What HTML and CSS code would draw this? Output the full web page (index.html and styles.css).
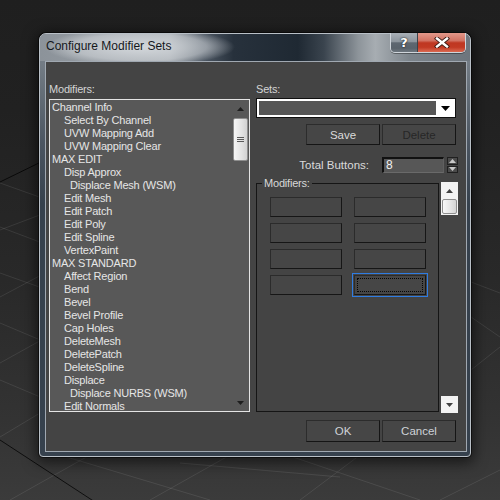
FILE: index.html
```html
<!DOCTYPE html>
<html>
<head>
<meta charset="utf-8">
<title>Configure Modifier Sets</title>
<link rel="stylesheet" href="styles.css">
</head>
<body>
<div class="desk">
  <svg class="grid" width="500" height="500" viewBox="0 0 500 500">
    <g stroke="#ffffff" stroke-opacity="0.09" stroke-width="1" fill="none">
      <line x1="0" y1="183" x2="45" y2="199"/>
      <line x1="0" y1="230" x2="45" y2="213"/>
      <line x1="0" y1="227" x2="45" y2="244"/>
      <line x1="0" y1="297" x2="45" y2="273"/>
      <line x1="0" y1="273" x2="45" y2="289"/>
      <line x1="0" y1="363" x2="45" y2="338"/>
      <line x1="0" y1="323" x2="45" y2="342"/>
      <line x1="0" y1="380" x2="45" y2="399"/>
      <line x1="0" y1="437" x2="45" y2="410"/>
      <line x1="10" y1="500" x2="90" y2="455"/>
      <line x1="60" y1="455" x2="210" y2="500"/>
      <line x1="150" y1="500" x2="230" y2="455"/>
      <line x1="180" y1="463" x2="340" y2="477"/>
      <line x1="300" y1="500" x2="360" y2="455"/>
      <line x1="290" y1="456" x2="420" y2="500"/>
      <line x1="440" y1="500" x2="500" y2="470"/>
      <line x1="471" y1="282" x2="500" y2="293"/>
      <line x1="471" y1="317" x2="500" y2="337"/>
      <line x1="471" y1="370" x2="500" y2="347"/>
    </g>
    <g stroke="#000" stroke-opacity="0.75" stroke-width="1" fill="none">
      <line x1="0" y1="182" x2="45" y2="160"/>
      <line x1="0" y1="440" x2="95" y2="502"/>
    </g>
  </svg>

  <div class="win">
    <div class="titlebar">
      <span class="title">Configure Modifier Sets</span>
      <div class="caps">
        <div class="cap help">?</div>
        <div class="cap close">
          <svg width="16" height="11" viewBox="0 0 16 11">
            <path d="M3 1.5 L13 9.5 M13 1.5 L3 9.5" stroke="#3b1a14" stroke-width="4.2" stroke-linecap="square"/>
            <path d="M3 1.5 L13 9.5 M13 1.5 L3 9.5" stroke="#ffffff" stroke-width="2.4" stroke-linecap="square"/>
          </svg>
        </div>
      </div>
    </div>

    <div class="client">
      <div class="leftcol">
        <div class="lbl">Modifiers:</div>
        <div class="listbox">
          <div class="items">
            <div class="it">Channel Info</div>
            <div class="it i1">Select By Channel</div>
            <div class="it i1">UVW Mapping Add</div>
            <div class="it i1">UVW Mapping Clear</div>
            <div class="it">MAX EDIT</div>
            <div class="it i1">Disp Approx</div>
            <div class="it i2">Displace Mesh (WSM)</div>
            <div class="it i1">Edit Mesh</div>
            <div class="it i1">Edit Patch</div>
            <div class="it i1">Edit Poly</div>
            <div class="it i1">Edit Spline</div>
            <div class="it i1">VertexPaint</div>
            <div class="it">MAX STANDARD</div>
            <div class="it i1">Affect Region</div>
            <div class="it i1">Bend</div>
            <div class="it i1">Bevel</div>
            <div class="it i1">Bevel Profile</div>
            <div class="it i1">Cap Holes</div>
            <div class="it i1">DeleteMesh</div>
            <div class="it i1">DeletePatch</div>
            <div class="it i1">DeleteSpline</div>
            <div class="it i1">Displace</div>
            <div class="it i2">Displace NURBS (WSM)</div>
            <div class="it i1">Edit Normals</div>
          </div>
          <div class="vs">
            <div class="vs-arrow">
              <svg width="7" height="4" viewBox="0 0 7 4"><path d="M0 4 L3.5 0 L7 4 Z" fill="#1e1e1e"/></svg>
            </div>
            <div class="vs-thumb">
              <span></span><span></span><span></span>
            </div>
            <div class="vs-fill"></div>
            <div class="vs-arrow">
              <svg width="7" height="4" viewBox="0 0 7 4"><path d="M0 0 L7 0 L3.5 4 Z" fill="#1e1e1e"/></svg>
            </div>
          </div>
        </div>
      </div>

      <div class="rightcol">
        <div class="lbl">Sets:</div>
        <div class="combo">
          <div class="combo-field"></div>
          <div class="combo-arrow">
            <svg width="9" height="5" viewBox="0 0 9 5"><path d="M0 0 L9 0 L4.5 5 Z" fill="#000"/></svg>
          </div>
        </div>
        <div class="btnrow">
          <div class="btn">Save</div>
          <div class="btn dim">Delete</div>
        </div>
        <div class="totalrow">
          <span class="tlabel">Total Buttons:</span>
          <div class="spinfield">8</div>
          <div class="spin">
            <div class="spin-half">
              <svg width="7" height="4" viewBox="0 0 7 4"><path d="M0 4 L3.5 0 L7 4 Z" fill="#c8c8c8"/></svg>
            </div>
            <div class="spin-half">
              <svg width="7" height="4" viewBox="0 0 7 4"><path d="M0 0 L7 0 L3.5 4 Z" fill="#c8c8c8"/></svg>
            </div>
          </div>
        </div>
        <div class="grouprow">
          <div class="group">
            <span class="glabel">Modifiers:</span>
            <div class="mgrid">
              <div class="mb"></div>
              <div class="mb"></div>
              <div class="mb"></div>
              <div class="mb"></div>
              <div class="mb"></div>
              <div class="mb"></div>
              <div class="mb"></div>
              <div class="mb focus"></div>
            </div>
          </div>
          <div class="sb2">
            <div class="sb2-arrow">
              <svg width="7" height="4" viewBox="0 0 7 4"><path d="M0 4 L3.5 0 L7 4 Z" fill="#404040"/></svg>
            </div>
            <div class="sb2-thumbwrap"><div class="sb2-thumb"></div></div>
            <div class="sb2-fill"></div>
            <div class="sb2-arrow">
              <svg width="7" height="4" viewBox="0 0 7 4"><path d="M0 0 L7 0 L3.5 4 Z" fill="#404040"/></svg>
            </div>
          </div>
        </div>
        <div class="btnrow okrow">
          <div class="btn ok">OK</div>
          <div class="btn ok">Cancel</div>
        </div>
      </div>
    </div>
  </div>
</div>
</body>
</html>
```

FILE: styles.css
```css
* {
  box-sizing: border-box;
}

html, body {
  margin: 0;
  padding: 0;
}

body {
  width: 500px;
  height: 500px;
  overflow: hidden;
  font-family: "Liberation Sans", Arial, sans-serif;
  font-size: 11px;
  letter-spacing: -0.2px;
}

.desk {
  position: relative;
  width: 500px;
  height: 500px;
  overflow: hidden;
  background: linear-gradient(180deg, #1f1f1f 0px, #212121 110px, #292929 280px, #333333 420px, #3b3b3b 500px);
}

.grid {
  position: absolute;
  left: 0;
  top: 0;
}

/* ---------- window ---------- */
.win {
  position: absolute;
  left: 39px;
  top: 33px;
  width: 432px;
  height: 424px;
  border: 1px solid #b9c0c7;
  border-radius: 7px 7px 4px 4px;
  padding: 0 3px 4px 5px;
  display: flex;
  flex-direction: column;
  background: linear-gradient(180deg, #7f878f 0px, #6e7780 40px, #4b5561 110px, #36414d 170px, #36414d 100%);
  box-shadow: 0 0 0 1px rgba(0, 0, 0, 0.55), 0 3px 14px 3px rgba(0, 0, 0, 0.55);
}

.titlebar {
  height: 27px;
  margin: 0 -3px 0 -5px;
  padding: 0 4px 0 6px;
  display: flex;
  justify-content: space-between;
  align-items: flex-start;
  border-radius: 6px 6px 0 0;
  background:
    radial-gradient(ellipse 95px 19px at 100px 13px, rgba(214, 218, 222, 0.95), rgba(214, 218, 222, 0.55) 70%, rgba(214, 218, 222, 0) 100%),
    linear-gradient(90deg, #8c939a 0%, #9ca2a8 30%, #4e5864 38%, #27313c 45%, #1f2933 60%, #3a444e 66%, #8d949a 74%, #a7adb2 78%, #7c848b 86%, #6d757d 100%);
}

.title {
  line-height: 25px;
  font-size: 12px;
  letter-spacing: 0;
  color: #15181c;
}

.caps {
  display: flex;
  margin-top: -1px;
  border: 1px solid #cfd5db;
  border-top: none;
  border-radius: 0 0 5px 5px;
  overflow: hidden;
  box-shadow: 0 1px 0 rgba(0, 0, 0, 0.35);
}

.cap {
  height: 19px;
  display: flex;
  align-items: center;
  justify-content: center;
}

.help {
  width: 27px;
  border-right: 1px solid #3b424a;
  background: linear-gradient(180deg, #a9b0b7 0%, #8d959d 45%, #5e6771 52%, #59626b 80%, #6d767e 100%);
  color: #ffffff;
  font-family: "DejaVu Sans", sans-serif;
  font-weight: bold;
  font-size: 13px;
  text-shadow: 0 0 2px #1c2228, 0 0 1px #1c2228;
}

.close {
  width: 47px;
  background: linear-gradient(180deg, #e3988a 0%, #d27363 40%, #bf3722 52%, #c23a24 75%, #db6a52 100%);
}

/* ---------- client ---------- */
.client {
  flex: 1;
  border: 1px solid #a0a8b1;
  background: #444444;
  padding: 21px 0 0 3px;
  display: flex;
  gap: 6px;
  color: #d8d8d8;
}

.leftcol {
  width: 201px;
  display: flex;
  flex-direction: column;
}

.rightcol {
  width: 202px;
  display: flex;
  flex-direction: column;
}

.lbl {
  height: 13px;
  line-height: 13px;
  color: #d4d4d4;
  white-space: nowrap;
}

/* list box */
.listbox {
  margin-top: 3px;
  height: 313px;
  border: 1px solid #e4e4e4;
  background: #585858;
  display: flex;
  overflow: hidden;
}

.items {
  flex: 1;
  padding-top: 1px;
  color: #e6e6e6;
  overflow: hidden;
}

.it {
  height: 13px;
  line-height: 13px;
  padding-left: 2px;
  white-space: nowrap;
}

.it.i1 {
  padding-left: 14px;
}

.it.i2 {
  padding-left: 20px;
}

.vs {
  width: 17px;
  display: flex;
  flex-direction: column;
  align-items: center;
}

.vs-arrow {
  width: 17px;
  height: 17px;
  display: flex;
  align-items: center;
  justify-content: center;
}

.vs-thumb {
  margin-top: 1px;
  width: 15px;
  height: 43px;
  border: 1px solid #8e8e8e;
  border-radius: 2px;
  background: linear-gradient(90deg, #f6f6f6, #e2e2e2 60%, #d2d2d2);
  display: flex;
  flex-direction: column;
  align-items: center;
  justify-content: center;
  gap: 1px;
}

.vs-thumb span {
  width: 7px;
  height: 1px;
  background: #5a5a5a;
}

.vs-fill {
  flex: 1;
}

/* combo */
.combo {
  margin-top: 2px;
  width: 200px;
  height: 20px;
  border: 1px solid #101010;
  background: #ffffff;
  padding: 2px 1px 2px 2px;
  display: flex;
}

.combo-field {
  flex: 1;
  background: #565656;
}

.combo-arrow {
  width: 18px;
  display: flex;
  align-items: center;
  justify-content: center;
}

/* buttons */
.btnrow {
  margin-top: 6px;
  display: flex;
  justify-content: flex-end;
  gap: 2px;
  padding-right: 2px;
}

.btn {
  width: 74px;
  height: 21px;
  display: flex;
  align-items: center;
  justify-content: center;
  border: 1px solid;
  border-color: #2c2c2c #151515 #151515 #2c2c2c;
  background: #464646;
  color: #dadada;
  font-size: 11.5px;
  letter-spacing: 0;
}

.btn.dim {
  color: #262626;
}

.okrow {
  margin-top: 7px;
}

.btn.ok {
  height: 22px;
  color: #cfd3d8;
}

/* total buttons */
.totalrow {
  margin-top: 12px;
  height: 16px;
  display: flex;
  justify-content: flex-end;
  align-items: center;
}

.tlabel {
  margin-right: 13px;
  color: #dadada;
  font-size: 11.5px;
  letter-spacing: 0;
}

.spinfield {
  width: 62px;
  height: 16px;
  border-style: solid;
  border-width: 2px 1px 1px 2px;
  border-color: #111111 #606060 #6a6a6a #111111;
  background: #575757;
  color: #f2f2f2;
  padding-left: 2px;
  line-height: 13px;
  font-size: 12px;
}

.spin {
  margin-left: 3px;
  width: 11px;
  height: 16px;
  display: flex;
  flex-direction: column;
  gap: 1px;
}

.spin-half {
  flex: 1;
  border: 1px solid #202020;
  background: #4b4b4b;
  display: flex;
  align-items: center;
  justify-content: center;
}

/* modifiers group */
.grouprow {
  margin-top: 9px;
  height: 231px;
  display: flex;
  gap: 2px;
}

.group {
  position: relative;
  margin-top: 1px;
  width: 183px;
  height: 229px;
  border: 1px solid #151515;
  padding: 13px 0 0 13px;
}

.glabel {
  position: absolute;
  top: -7px;
  left: 5px;
  padding: 0 2px;
  line-height: 13px;
  background: #444444;
  color: #d8d8d8;
}

.mgrid {
  display: grid;
  grid-template-columns: 72px 72px;
  grid-auto-rows: 20px;
  column-gap: 12px;
  row-gap: 6px;
}

.mb {
  border: 1px solid;
  border-color: #2b2b2b #161616 #161616 #2b2b2b;
  background: #464646;
}

.mb.focus {
  position: relative;
  outline: 1px solid #2f7ce2;
  outline-offset: 1px;
}

.mb.focus::after {
  content: "";
  position: absolute;
  left: 2px;
  top: 2px;
  right: 2px;
  bottom: 2px;
  border: 1px dotted #050505;
}

/* detached scrollbar */
.sb2 {
  width: 17px;
  display: flex;
  flex-direction: column;
}

.sb2-arrow {
  height: 17px;
  background: #f3f3f3;
  display: flex;
  align-items: center;
  justify-content: center;
}

.sb2-thumbwrap {
  height: 16px;
  background: #f3f3f3;
  padding: 0 1px 1px 1px;
}

.sb2-thumb {
  width: 100%;
  height: 100%;
  border: 1px solid #8e8e8e;
  border-radius: 2px;
  background: linear-gradient(90deg, #f8f8f8, #e4e4e4 60%, #d4d4d4);
}

.sb2-fill {
  flex: 1;
}
```
